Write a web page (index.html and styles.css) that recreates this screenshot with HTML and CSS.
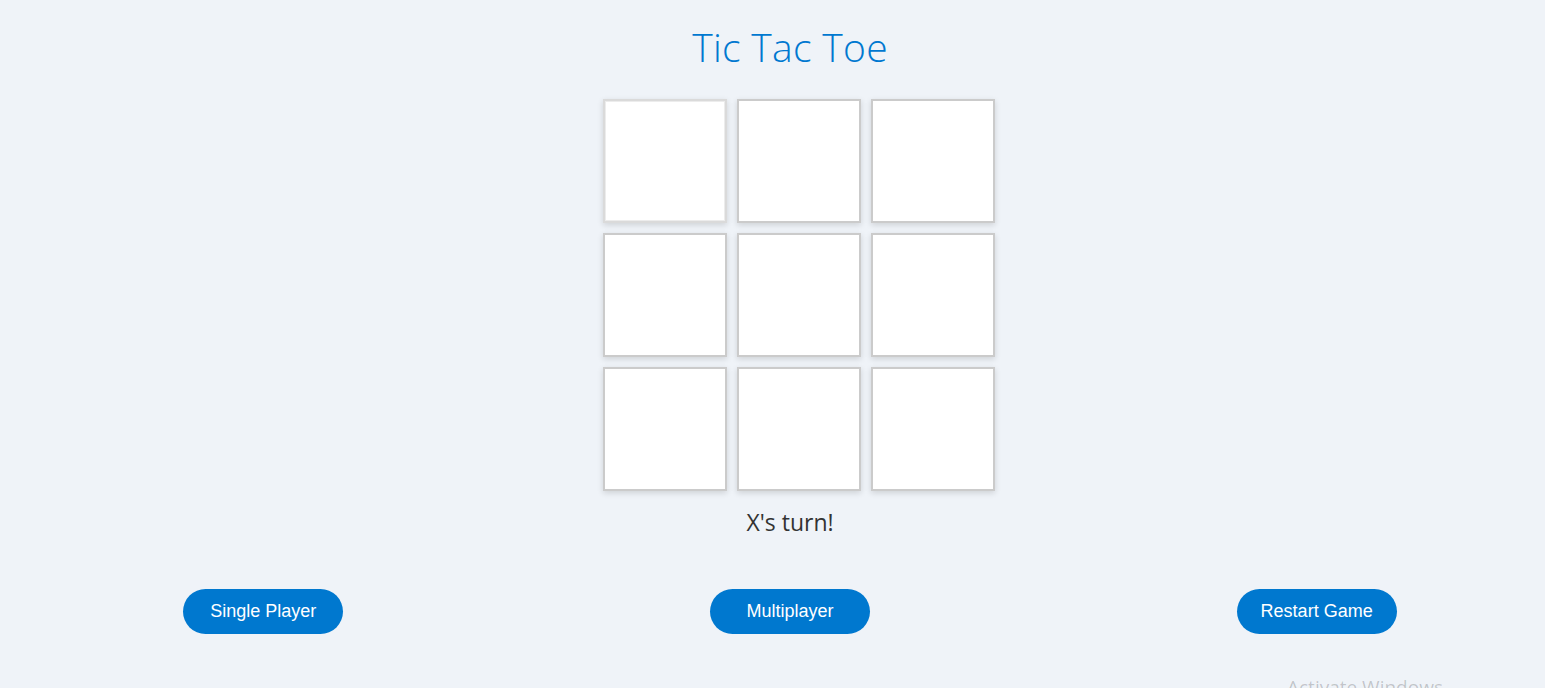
FILE: index.html
```html
<!DOCTYPE html>
<html lang="en">
<head>
<meta charset="utf-8">
<title>Tic Tac Toe</title>
<link rel="stylesheet" href="styles.css">
</head>
<body>
<main class="page">
  <h1 class="title">Tic Tac Toe</h1>
  <div class="board">
    <div class="cell cell-focus"></div>
    <div class="cell"></div>
    <div class="cell"></div>
    <div class="cell"></div>
    <div class="cell"></div>
    <div class="cell"></div>
    <div class="cell"></div>
    <div class="cell"></div>
    <div class="cell"></div>
  </div>
  <p class="status">X's turn!</p>
  <div class="controls">
    <button class="btn">Single Player</button>
    <button class="btn">Multiplayer</button>
    <button class="btn">Restart Game</button>
  </div>
</main>
<div class="watermark">Activate Windows</div>
</body>
</html>
```

FILE: styles.css
```css
html, body {
  margin: 0;
  padding: 0;
  overflow: hidden;
  background: #eff3f8;
}

body {
  height: 688px;
  position: relative;
  font-family: "Open Sans", "Liberation Sans", sans-serif;
}

.page {
  width: 1580px;
  display: flex;
  flex-direction: column;
  align-items: center;
}

.title {
  margin: 21px 0 0;
  font-family: "Open Sans", sans-serif;
  font-weight: 300;
  font-size: 39px;
  line-height: 52px;
  color: #0078d0;
  letter-spacing: 0.3px;
}

.board {
  margin-top: 26px;
  margin-left: 18px;
  display: grid;
  grid-template-columns: repeat(3, 124px);
  grid-auto-rows: 124px;
  gap: 10px;
}

.cell {
  box-sizing: border-box;
  background: #fff;
  border: 2px solid #cbcbcb;
  box-shadow: 0 2px 6px rgba(0, 0, 0, 0.14);
}

.cell-focus {
  border-color: #dadada;
  box-shadow: inset 0 0 0 1px #ececec, 0 2px 6px rgba(0, 0, 0, 0.14);
}

.status {
  margin: 16px 0 0;
  font-family: "Open Sans", sans-serif;
  font-size: 23px;
  line-height: 30px;
  color: #333;
}

.controls {
  margin-top: 52px;
  width: 100%;
  display: flex;
  justify-content: space-around;
}

.btn {
  width: 160px;
  height: 45px;
  border: none;
  border-radius: 23px;
  background: #0078cf;
  color: #fff;
  font-family: "Liberation Sans", Arial, sans-serif;
  font-size: 18px;
  padding: 0;
}

.watermark {
  position: absolute;
  left: 1287px;
  top: 674px;
  font-family: "Open Sans", sans-serif;
  font-size: 19px;
  color: rgba(0, 0, 0, 0.2);
  white-space: nowrap;
}
```
